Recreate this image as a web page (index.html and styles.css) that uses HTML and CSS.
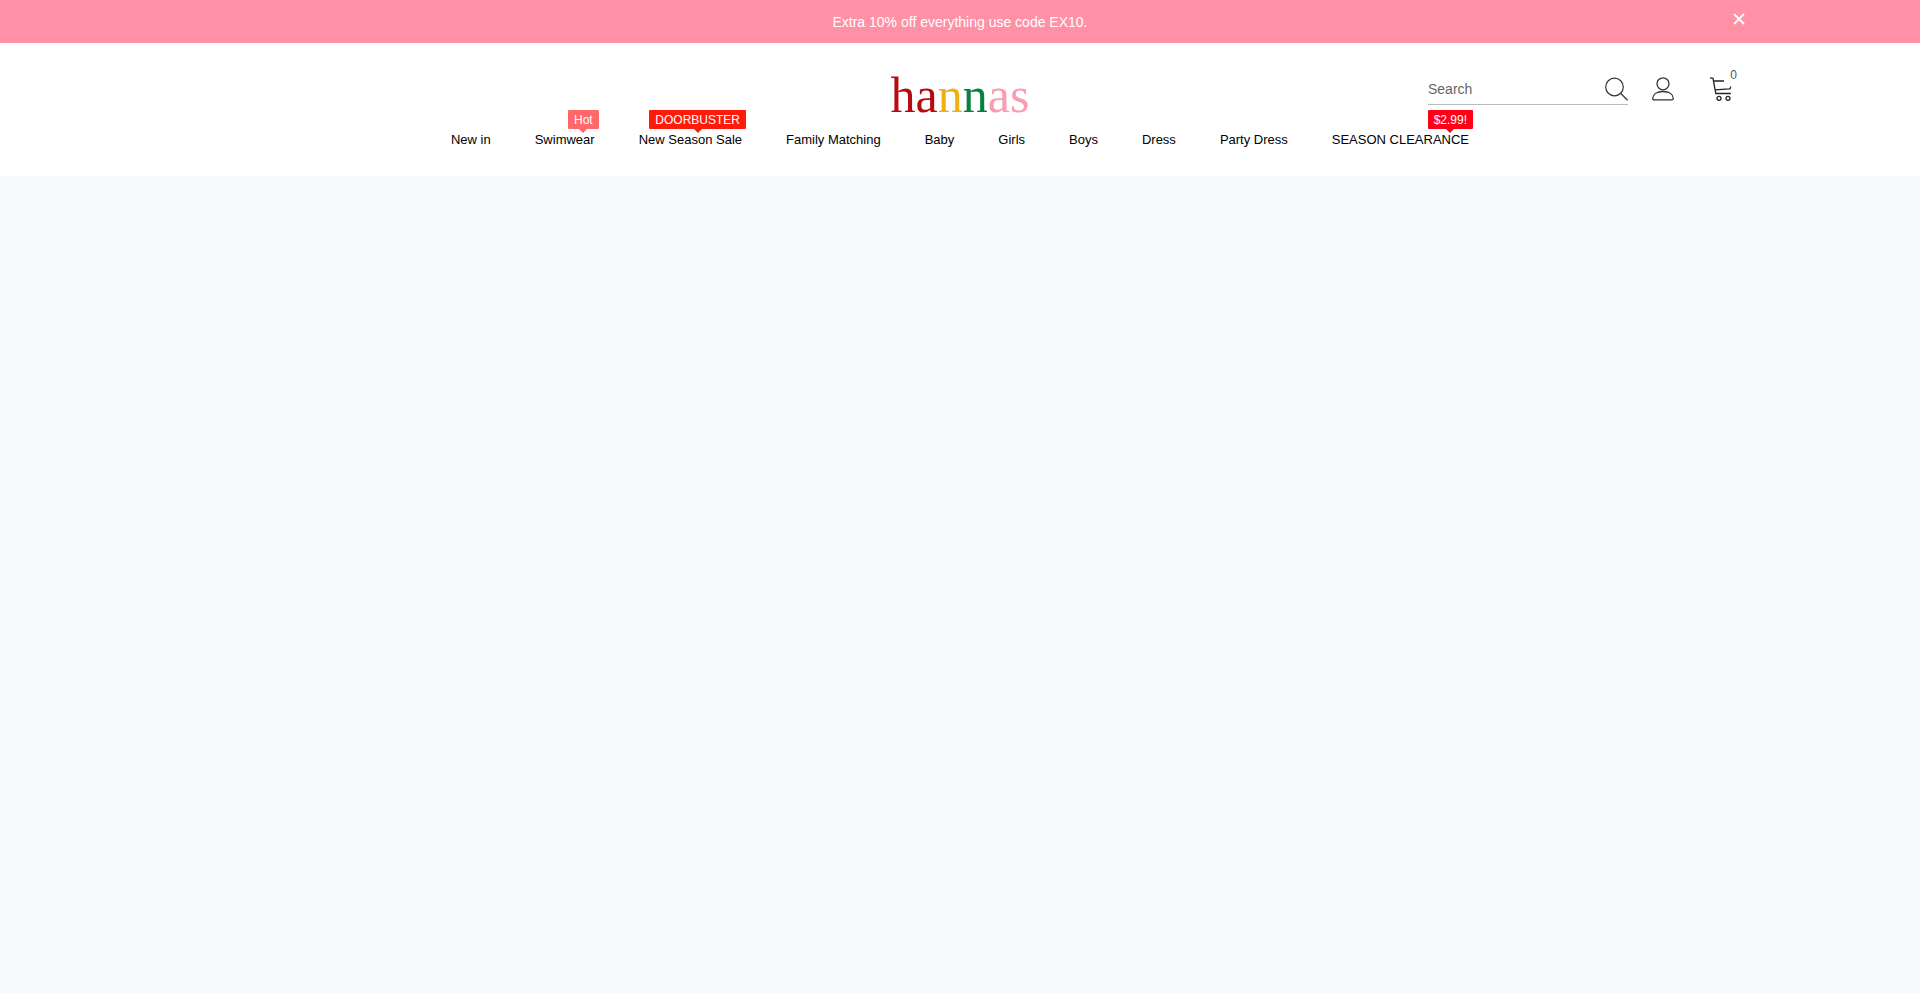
FILE: index.html
```html
<!DOCTYPE html>
<html lang="en">
<head>
<meta charset="utf-8">
<title>hannas</title>
<link rel="stylesheet" href="styles.css">
</head>
<body>
<div class="promo">
  <div class="promo-inner">
    <p class="promo-text">Extra 10% off everything use code EX10.</p>
    <button class="promo-close" type="button" aria-label="Close">
      <svg width="12" height="12" viewBox="0 0 12 12"><path d="M1 1l10 10M11 1L1 11" fill="none" stroke="#fff" stroke-width="1.800"/></svg>
    </button>
  </div>
</div>
<header class="header">
  <div class="masthead">
    <a class="logo" href="#"><span class="red">ha</span><span class="yellow">n</span><span class="green">n</span><span class="pink">as</span></a>
    <div class="tools">
      <form class="search">
        <input class="search-input" type="search" placeholder="Search" aria-label="Search">
        <button class="icon-button" type="button" aria-label="Submit search">
          <svg width="24" height="24" viewBox="0 0 24 24" fill="none" stroke="#333" stroke-width="1.2"><circle cx="10.500" cy="10" r="8.800"/><path d="M16.800 16.500L23.600 23.300"/></svg>
        </button>
      </form>
      <a class="account" href="#" aria-label="Account">
        <svg width="22" height="24" viewBox="0 0 22 24" fill="none" stroke="#333" stroke-width="1.3"><circle cx="11" cy="6.800" r="6"/><path d="M2 22.800C1.100 22.800.7 22.300.7 21.500.8 17.500 4.500 14.500 11 14.500s10.200 3 10.300 7c0 .8-.4 1.300-1.300 1.300z"/></svg>
      </a>
      <a class="cart" href="#" aria-label="Cart">
        <svg width="22" height="24" viewBox="0 0 22 24" fill="none" stroke="#222" stroke-width="1.300"><path d="M0 .8l3 .5 2.800 15.200h15M4 4h10M5.200 12.800l14-.9q1.500-.2 1.500-2.400"/><circle cx="9" cy="21.300" r="2"/><circle cx="18" cy="21.300" r="2"/></svg>
        <span class="cart-count">0</span>
      </a>
    </div>
  </div>
  <nav class="nav">
    <a href="#">New in</a>
    <a href="#">Swimwear<span class="badge badge-hot">Hot</span></a>
    <a href="#">New Season Sale<span class="badge badge-door">DOORBUSTER</span></a>
    <a href="#">Family Matching</a>
    <a href="#">Baby</a>
    <a href="#">Girls</a>
    <a href="#">Boys</a>
    <a href="#">Dress</a>
    <a href="#">Party Dress</a>
    <a href="#">SEASON CLEARANCE<span class="badge badge-price">$2.99!</span></a>
  </nav>
</header>
<main class="content"></main>
</body>
</html>
```
FILE: styles.css
```css
* { box-sizing: border-box; }
body {
  margin: 0;
  min-height: 100vh;
  display: flex;
  flex-direction: column;
  background: #fff;
  color: #000;
  font-family: "Liberation Sans", Arial, sans-serif;
  font-size: 14px;
}
a { color: inherit; text-decoration: none; }
button { border: 0; padding: 0; background: none; cursor: pointer; }
svg { display: block; }
.promo { background: #ff90a5; }
.promo-inner {
  position: relative;
  max-width: 1570px;
  margin: 0 auto;
  padding: 13px 16px 11px;
}
.promo-text { margin: 0; line-height: 19px; text-align: center; color: #fff; }
.promo-close { position: absolute; top: 13px; right: 0; }
.header { padding-bottom: 27px; }
.masthead {
  display: grid;
  grid-template-columns: 1fr auto 1fr;
  max-width: 1554px;
  margin: 0 auto;
  padding-top: 22px;
}
.logo {
  grid-column: 2;
  height: 60px;
  font-family: "Liberation Serif", serif;
  font-size: 50px;
  line-height: 60px;
}
.red { color: #b90a10; }
.yellow { color: #eeb111; }
.green { color: #078043; }
.pink { color: #fb9bb1; }
.tools {
  display: flex;
  justify-content: flex-end;
  align-items: flex-start;
  padding-top: 8px;
}
.search {
  display: flex;
  align-items: center;
  width: 200px;
  height: 32px;
  border-bottom: 1px solid #bbb;
}
.search-input {
  flex: 1;
  min-width: 0;
  padding: 0;
  border: 0;
  outline: 0;
  background: none;
  font: inherit;
}
.search-input::placeholder { color: #666; }
.account { margin: 4px 36px 0 24px; }
.cart { position: relative; width: 27px; padding-top: 4px; }
.cart-count {
  position: absolute;
  top: -6px;
  right: 0;
  font-size: 12px;
  line-height: 16px;
  color: #555;
}
.nav {
  display: flex;
  flex-wrap: wrap;
  justify-content: center;
  gap: 0 44px;
  padding-top: 5px;
  font-size: 13px;
  line-height: 19px;
}
.nav a { position: relative; }
.badge {
  position: absolute;
  right: -4px;
  bottom: 20px;
  padding: 1px 6px 0;
  border-radius: 1px;
  font-size: 12px;
  line-height: 18px;
  color: #fff;
}
.badge::after {
  content: "";
  position: absolute;
  top: 100%;
  left: 50%;
  margin-left: -4px;
  border: 4px solid transparent;
  border-top-color: inherit;
  border-bottom: 0;
}
.badge-hot { background: #ff6768; border-color: #ff6768; }
.badge-door { background: #ff1a0a; border-color: #ff1a0a; }
.badge-price { background: #ff0016; border-color: #ff0016; }
.content { flex: 1; background: #f7f8fa; }
```
